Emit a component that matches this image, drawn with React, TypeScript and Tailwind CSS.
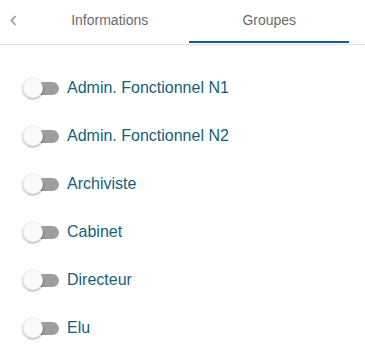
import { useState } from "react";

const groups = [
  "Admin. Fonctionnel N1",
  "Admin. Fonctionnel N2",
  "Archiviste",
  "Cabinet",
  "Directeur",
  "Elu",
];

const Toggle = ({ checked, onClick }: { checked: boolean; onClick: () => void }) => (
  <button
    type="button"
    onClick={onClick}
    className="relative w-[37px] h-[20px] flex items-center shrink-0"
  >
    <span
      className={`ml-[3px] w-[33px] h-[13px] rounded-full ${
        checked ? "bg-[#7fa9bd]" : "bg-[#9e9e9e]"
      }`}
    />
    <span
      className={`absolute top-0 w-[20px] h-[20px] rounded-full shadow-[0_1px_3px_rgba(0,0,0,0.4)] ${
        checked ? "left-[17px] bg-[#175e7e]" : "left-0 bg-[#fafafa]"
      }`}
    />
  </button>
);

export default function App() {
  const [tab, setTab] = useState("groupes");
  const [active, setActive] = useState<string[]>([]);

  return (
    <div className="w-[365px] h-[352px] bg-white font-['Liberation_Sans',Arial,sans-serif]">
      <div className="flex h-[45px] border-b border-[#e0e0e0] pr-4">
        <button type="button" className="w-[30px] flex items-center pl-[10px] pb-[3px]">
          <svg width="7" height="11" viewBox="0 0 7 11" fill="none">
            <path d="M5.5 1L1.5 5.5L5.5 10" stroke="#9a9a9a" strokeWidth="1.8" />
          </svg>
        </button>
        <button
          type="button"
          onClick={() => setTab("informations")}
          className="relative w-[160px] text-[14px] text-[#6b6b6b] pb-[4px]"
        >
          Informations
          {tab === "informations" && (
            <span className="absolute left-0 right-0 bottom-[1px] h-[2px] bg-[#175e7e]" />
          )}
        </button>
        <button
          type="button"
          onClick={() => setTab("groupes")}
          className="relative w-[160px] text-[14px] text-[#6b6b6b] pb-[4px]"
        >
          Groupes
          {tab === "groupes" && (
            <span className="absolute left-0 right-0 bottom-[1px] h-[2px] bg-[#175e7e]" />
          )}
        </button>
      </div>

      <div className="pt-[19px] pl-[23px]">
        {groups.map((g) => (
          <div key={g} className="h-[48px] flex items-center gap-[7px]">
            <Toggle
              checked={active.includes(g)}
              onClick={() =>
                setActive((a) => (a.includes(g) ? a.filter((x) => x !== g) : [...a, g]))
              }
            />
            <span className="text-[16px] text-[#145f80]">{g}</span>
          </div>
        ))}
      </div>
    </div>
  );
}
